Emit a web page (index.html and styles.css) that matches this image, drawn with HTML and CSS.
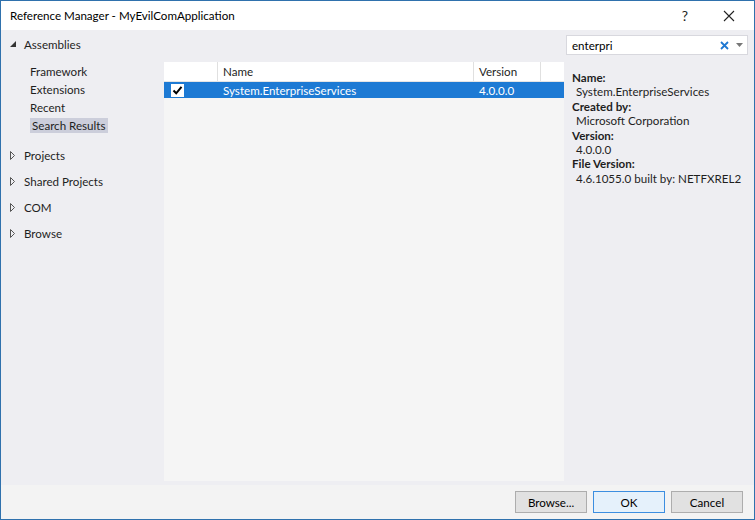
FILE: index.html
```html
<!DOCTYPE html>
<html lang="en">
  <head>
    <title>Reference Manager</title>
    <meta charset="utf-8">
    <link rel="stylesheet" href="styles.css">
  </head>
  <body>
  <div id="window">
    <div id="titlebar">
      <span class="title">Reference Manager - MyEvilComApplication</span>
      <span class="tbtn help">?</span>
      <span class="tbtn close">
        <svg width="12" height="12" viewBox="0 0 12 12"><path d="M1 1L11 11M11 1L1 11" stroke="#222" stroke-width="1.1" fill="none"/></svg>
      </span>
    </div>

    <div id="main">
      <div id="nav">
        <div class="group open">
          <svg class="arrow" width="7" height="7" viewBox="0 0 7 7"><path d="M6 0V6H0Z" fill="#333"/></svg>
          Assemblies
        </div>
        <div class="sub">Framework</div>
        <div class="sub">Extensions</div>
        <div class="sub">Recent</div>
        <div class="sub last"><span class="sel">Search Results</span></div>
        <div class="group">
          <svg class="arrow" width="6" height="9" viewBox="0 0 6 9"><path d="M0.5 0.5V8.5L4.5 4.5Z" fill="none" stroke="#555"/></svg>
          Projects
        </div>
        <div class="group">
          <svg class="arrow" width="6" height="9" viewBox="0 0 6 9"><path d="M0.5 0.5V8.5L4.5 4.5Z" fill="none" stroke="#555"/></svg>
          Shared Projects
        </div>
        <div class="group">
          <svg class="arrow" width="6" height="9" viewBox="0 0 6 9"><path d="M0.5 0.5V8.5L4.5 4.5Z" fill="none" stroke="#555"/></svg>
          COM
        </div>
        <div class="group">
          <svg class="arrow" width="6" height="9" viewBox="0 0 6 9"><path d="M0.5 0.5V8.5L4.5 4.5Z" fill="none" stroke="#555"/></svg>
          Browse
        </div>
      </div>

      <div id="center">
        <div class="list">
          <div class="row head">
            <div class="c-check"></div>
            <div class="c-name">Name</div>
            <div class="c-ver">Version</div>
            <div class="c-rest"></div>
          </div>
          <div class="row selected">
            <div class="c-check">
              <span class="checkbox">
                <svg width="11" height="11" viewBox="0 0 11 11"><path d="M1.5 5.5L4.2 8.3L9.5 1.8" stroke="#000" stroke-width="2" fill="none"/></svg>
              </span>
            </div>
            <div class="c-name">System.EnterpriseServices</div>
            <div class="c-ver">4.0.0.0</div>
            <div class="c-rest"></div>
          </div>
        </div>
      </div>

      <div id="details">
        <div class="search">
          <span class="query">enterpri</span>
          <svg class="clear" width="9" height="9" viewBox="0 0 9 9"><path d="M1 1L8 8M8 1L1 8" stroke="#1e78d2" stroke-width="1.8" fill="none"/></svg>
          <svg class="drop" width="7" height="4" viewBox="0 0 7 4"><path d="M0 0H7L3.5 4Z" fill="#777"/></svg>
        </div>
        <div class="info">
          <div class="label">Name:</div>
          <div class="value">System.EnterpriseServices</div>
          <div class="label">Created by:</div>
          <div class="value">Microsoft Corporation</div>
          <div class="label">Version:</div>
          <div class="value">4.0.0.0</div>
          <div class="label">File Version:</div>
          <div class="value">4.6.1055.0 built by: NETFXREL2</div>
        </div>
      </div>
    </div>

    <div id="buttons">
      <button class="btn">Browse...</button>
      <button class="btn default">OK</button>
      <button class="btn">Cancel</button>
    </div>
  </div>
  </body>
</html>
```

FILE: styles.css
```css
html {
  height: 100%;
}
body {
  margin: 0;
  padding: 0;
  background: #fff;
  color: #1e1e1e;
  font-family: Lato, "Noto Sans", sans-serif;
  font-size: 11.6px;
}
#window {
  width: 753px;
  height: 518px;
  border: 1px solid #2f71ad;
  display: flex;
  flex-direction: column;
  background: #eeeef2;
}
#titlebar {
  height: 29px;
  background: #fff;
  display: flex;
  align-items: center;
  padding-left: 9px;
}
.title {
  flex: 1;
  color: #000;
}
.tbtn {
  width: 44px;
  text-align: center;
  color: #222;
}
.help {
  font-size: 14px;
}
.close {
  display: flex;
  justify-content: center;
  padding-right: 3px;
}

#main {
  height: 455px;
  display: flex;
}
#nav {
  width: 163px;
  padding-top: 5px;
}
.group {
  height: 26px;
  display: flex;
  align-items: center;
  padding-left: 9px;
}
.group .arrow {
  margin-right: 8px;
}
.group.open {
  height: 18px;
  margin-bottom: 9px;
}
.group.open .arrow {
  margin-right: 7px;
}
.sub {
  height: 18px;
  display: flex;
  align-items: center;
  padding-left: 29px;
}
.sub.last {
  margin-bottom: 8px;
}
.sel {
  background: #cccedb;
  padding: 1px 2px;
}

#center {
  width: 400px;
  padding: 32px 0 4px 0;
  display: flex;
}
.list {
  flex: 1;
  background: #f5f5f5;
}
.row {
  display: flex;
  height: 16px;
  align-items: center;
}
.row.head {
  height: 19px;
  background: #fff;
  border-bottom: 1px solid #e5e5e5;
}
.row.head > div {
  border-right: 1px solid #e0e0e0;
  height: 19px;
  display: flex;
  align-items: center;
  box-sizing: border-box;
}
.row.head .c-rest {
  border-right: none;
}
.c-check {
  flex: 0 0 54px;
  display: flex;
  padding-left: 7px;
  box-sizing: border-box;
}
.c-name {
  flex: 0 0 256px;
  padding-left: 5px;
  box-sizing: border-box;
}
.c-ver {
  flex: 0 0 67px;
  padding-left: 5px;
  box-sizing: border-box;
}
.c-rest {
  flex: 1;
}
.row.selected {
  background: #1d7ad4;
  color: #fff;
}
.checkbox {
  width: 11px;
  height: 11px;
  background: #fff;
  border: 1px solid #fff;
  display: flex;
}

#details {
  width: 190px;
  padding: 5px 6px 0 2px;
  box-sizing: border-box;
}
.search {
  height: 20px;
  background: #fff;
  border: 1px solid #d8d8de;
  display: flex;
  align-items: center;
  padding-left: 5px;
  box-sizing: border-box;
}
.query {
  flex: 1;
  color: #000;
}
.clear {
  margin-right: 7px;
}
.drop {
  margin-right: 4px;
}
.info {
  padding: 16px 0 0 6px;
  line-height: 14.4px;
}
.label {
  font-weight: bold;
}
.value {
  padding-left: 4px;
}

#buttons {
  flex: 1;
  background: #f3f3f3;
  display: flex;
  justify-content: flex-end;
  align-items: center;
  gap: 6px;
  padding-right: 11px;
}
.btn {
  width: 72px;
  height: 22px;
  background: #e1e1e1;
  border: 1px solid #adadad;
  font-family: Lato, "Noto Sans", sans-serif;
  font-size: 11.6px;
  color: #000;
  padding: 0;
}
.btn.default {
  border: 1px solid #3c8ee0;
  background: #e5f1fb;
}
```
